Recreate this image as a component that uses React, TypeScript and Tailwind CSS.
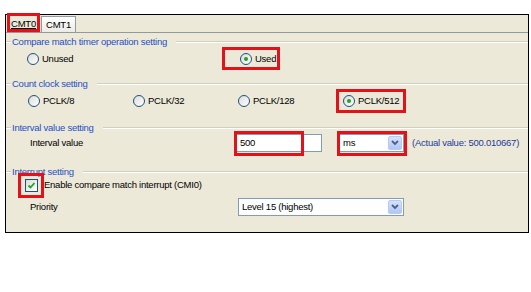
import type { ReactNode } from 'react';

function Mark({ className }: { className: string }) {
  return <span className={`pointer-events-none absolute z-10 border-[3px] border-[#e3121a] ${className}`} />;
}

function GroupHeader({ title, className }: { title: string; className: string }) {
  return (
    <div className={`flex items-center h-[12px] ${className}`}>
      <div className="w-[5px] h-[2px] border-t border-[#d0d0bf] bg-white" />
      <span className="px-[1px] leading-none text-[#1f4fc6]">{title}</span>
      <div className="ml-[8px] flex-1 h-[2px] border-t border-[#d0d0bf] bg-white" />
    </div>
  );
}

function Radio({ checked, label }: { checked?: boolean; label: string }) {
  return (
    <span className="flex items-center gap-[3px]">
      <span className="flex items-center justify-center w-[12px] h-[12px] rounded-full border border-[#1c5180] bg-linear-to-br from-[#dcdcd6] to-white">
        {checked && <span className="w-[4px] h-[4px] rounded-full bg-[#21a121]" />}
      </span>
      <span className="leading-none">{label}</span>
    </span>
  );
}

function Select({ value, className, children }: { value: string; className: string; children?: ReactNode }) {
  return (
    <div className={`relative flex items-center h-[18px] border border-[#7f9db9] bg-white ${className}`}>
      <span className="flex-1 pl-[3px] leading-none">{value}</span>
      <span className="flex items-center justify-center w-[14px] h-[14px] mr-[1px] rounded-[2px] border border-[#b7caf5] bg-linear-to-b from-[#d6e2fc] to-[#b1c6f6]">
        <svg width="8" height="6" viewBox="0 0 8 6">
          <polyline points="1,1 4,4 7,1" fill="none" stroke="#4d6185" strokeWidth="1.8" />
        </svg>
      </span>
      {children}
    </div>
  );
}

export default function App() {
  return (
    <div className="w-[531px] h-[292px] bg-white pt-[14px] pl-[5px] font-['Liberation_Sans',Arial,sans-serif] text-[9.5px] tracking-[-0.25px] text-black">
      <div className="w-[524px] h-[219px] border border-black bg-[#ece9d8]">
        {/* tabs */}
        <div className="flex items-end h-[18px] border-b border-[#919b9c] pl-[2px]">
          <div className="relative flex items-center justify-center w-[31px] h-[17px] bg-[#ece9d8]">
            <span className="underline leading-none">CMT0</span>
            <Mark className="-left-[1px] -top-[2px] w-[33px] h-[19px]" />
          </div>
          <div className="flex items-center justify-center ml-[2px] w-[35px] h-[16px] border border-b-0 border-[#919b9c] bg-linear-to-b from-white to-[#ecebe6]">
            <span className="leading-none">CMT1</span>
          </div>
        </div>

        <GroupHeader title="Compare match timer operation setting" className="mt-[3px]" />
        <div className="flex items-center h-[22px] pl-[21px]">
          <div className="w-[213px]">
            <Radio label="Unused" />
          </div>
          <div className="relative">
            <Radio checked label="Used" />
            <Mark className="-left-[18px] -top-[6px] w-[58px] h-[23px]" />
          </div>
        </div>

        <GroupHeader title="Count clock setting" className="mt-[8px]" />
        <div className="grid grid-cols-[105px_105px_105px_105px] items-center h-[22px] pl-[22px]">
          <Radio label="PCLK/8" />
          <Radio label="PCLK/32" />
          <Radio label="PCLK/128" />
          <div className="relative">
            <Radio checked label="PCLK/512" />
            <Mark className="-left-[7px] -top-[6px] w-[70px] h-[24px]" />
          </div>
        </div>

        <GroupHeader title="Interval value setting" className="mt-[10px]" />
        <div className="flex items-center h-[18px] pl-[24px]">
          <span className="w-[206px] leading-none">Interval value</span>
          <div className="relative flex items-center w-[86px] h-[18px] border border-[#7f9db9] bg-white pl-[3px]">
            <span className="leading-none">500</span>
            <Mark className="-left-[3px] -top-[4px] w-[70px] h-[25px]" />
          </div>
          <Select value="ms" className="ml-[17px] w-[65px]">
            <Mark className="-left-[3px] -top-[4px] w-[70px] h-[25px]" />
          </Select>
          <span className="ml-[8px] leading-none text-[#24399b]">(Actual value: 500.010667)</span>
        </div>

        <GroupHeader title="Interrupt setting" className="mt-[14px]" />
        <div className="flex items-center h-[14px] pl-[19px]">
          <div className="relative">
            <span className="flex items-center justify-center w-[13px] h-[13px] border border-[#1c5180] bg-linear-to-br from-[#dcdcd6] to-white">
              <svg width="9" height="9" viewBox="0 0 9 9">
                <polyline points="1.5,4.5 3.5,6.5 7.5,2" fill="none" stroke="#21a121" strokeWidth="1.8" />
              </svg>
            </span>
            <Mark className="-left-[7px] -top-[6px] w-[26px] h-[25px]" />
          </div>
          <span className="ml-[6px] leading-none">Enable compare match interrupt (CMI0)</span>
        </div>
        <div className="flex items-center h-[18px] mt-[6px] pl-[24px]">
          <span className="w-[208px] leading-none">Priority</span>
          <Select value="Level 15 (highest)" className="w-[166px]" />
        </div>
      </div>
    </div>
  );
}
